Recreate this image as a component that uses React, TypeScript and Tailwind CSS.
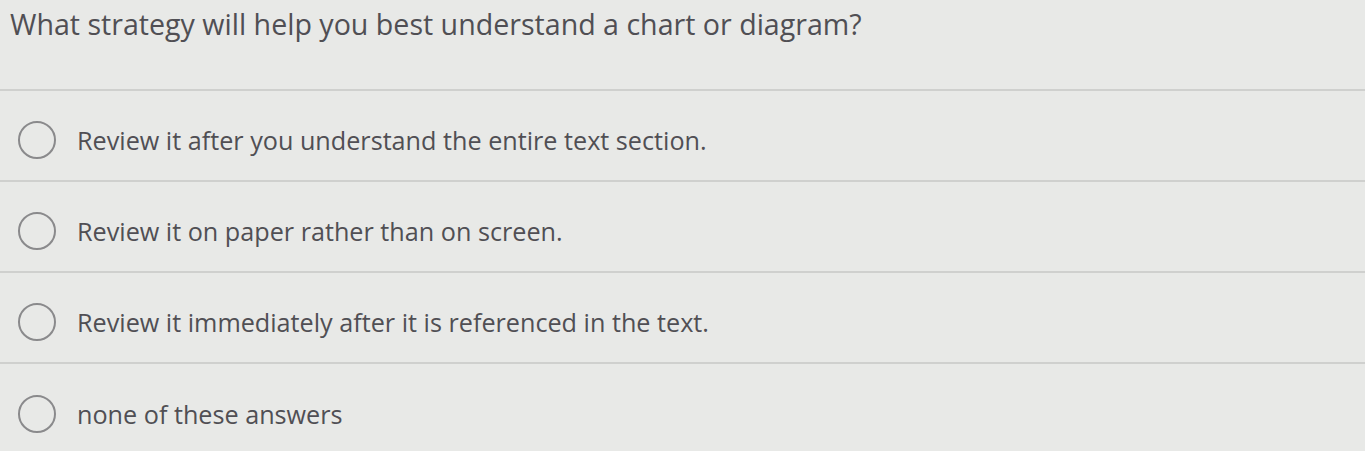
import React from 'react';

const options = [
  'Review it after you understand the entire text section.',
  'Review it on paper rather than on screen.',
  'Review it immediately after it is referenced in the text.',
  'none of these answers',
];

const Radio: React.FC = () => (
  <span className="block w-[38px] h-[38px] rounded-full border-[2.5px] border-[#8a8a8c] shrink-0" />
);

export default function App() {
  return (
    <div className="w-[1365px] h-[451px] overflow-hidden bg-[#e8e9e7] text-[#504f54] font-['Open_Sans',sans-serif]">
      <div className="h-[91px] border-b-2 border-[#cfd0ce] pl-[10px] pt-[4px]">
        <h1 className="text-[28.6px] leading-[40px]">
          What strategy will help you best understand a chart or diagram?
        </h1>
      </div>
      {options.map((text, i) => (
        <div
          key={i}
          className={`h-[91px] flex items-center gap-[21px] pl-[18px] pt-[8px] ${
            i < options.length - 1 ? 'border-b-2 border-[#cfd0ce]' : ''
          }`}
        >
          <Radio />
          <span className="text-[25.2px] leading-[32px]">{text}</span>
        </div>
      ))}
    </div>
  );
}
